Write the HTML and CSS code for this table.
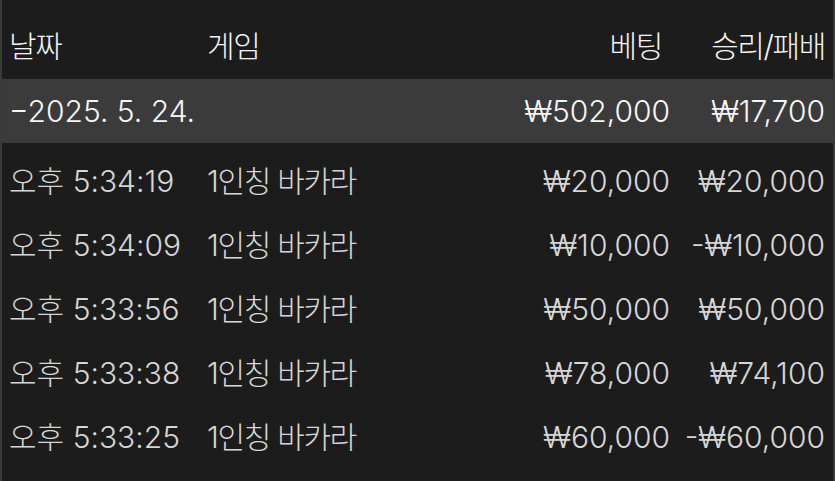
FILE: index.html
```html
<!DOCTYPE html>
<html lang="ko">
<head>
    <meta charset="UTF-8">
    <meta name="viewport" content="width=device-width, initial-scale=1.0">
    <title>베팅 기록</title>
    <link rel="stylesheet" href="styles.css">
</head>
<body>
    <div class="history">
        <div class="row head-row">
            <div class="cell">날짜</div>
            <div class="cell">게임</div>
            <div class="cell num bet-head">베팅</div>
            <div class="cell num">승리/패배</div>
        </div>

        <!-- 날짜별 합계 -->
        <div class="row day-row">
            <div class="cell day">−2025. 5. 24.</div>
            <div class="cell"></div>
            <div class="cell num">₩502,000</div>
            <div class="cell num">₩17,700</div>
        </div>

        <div class="row">
            <div class="cell">오후 5:34:19</div>
            <div class="cell game">1인칭 바카라</div>
            <div class="cell num">₩20,000</div>
            <div class="cell num">₩20,000</div>
        </div>
        <div class="row">
            <div class="cell">오후 5:34:09</div>
            <div class="cell game">1인칭 바카라</div>
            <div class="cell num">₩10,000</div>
            <div class="cell num">-₩10,000</div>
        </div>
        <div class="row">
            <div class="cell">오후 5:33:56</div>
            <div class="cell game">1인칭 바카라</div>
            <div class="cell num">₩50,000</div>
            <div class="cell num">₩50,000</div>
        </div>
        <div class="row">
            <div class="cell">오후 5:33:38</div>
            <div class="cell game">1인칭 바카라</div>
            <div class="cell num">₩78,000</div>
            <div class="cell num">₩74,100</div>
        </div>
        <div class="row">
            <div class="cell">오후 5:33:25</div>
            <div class="cell game">1인칭 바카라</div>
            <div class="cell num">₩60,000</div>
            <div class="cell num">-₩60,000</div>
        </div>
    </div>
</body>
</html>
```

FILE: styles.css
```css
* {
    margin: 0;
    padding: 0;
    box-sizing: border-box;
}

body {
    width: 835px;
    height: 481px;
    background: #1c1c1c;
    font-family: 'Inter', 'Noto Sans CJK KR', sans-serif;
    overflow: hidden;
}

.history {
    height: 481px;
    border-left: 2px solid #3a3a3a;
    border-right: 2px solid #3a3a3a;
    padding-top: 14px;
}

.row {
    display: grid;
    grid-template-columns: 198px 1fr 200px 155px;
    align-items: center;
    height: 64px;
    padding: 0 8px 0 7px;
    color: #d6d6d6;
    font-size: 30px;
    font-weight: 300;
    line-height: 1;
}

/* 한글 글자폭 보정 */
.head-row {
    color: #f4f4f4;
    letter-spacing: -1.4px;
}

.bet-head {
    padding-right: 8px;
}

.game {
    letter-spacing: -1.3px;
}

.day-row {
    background: #3b3b3b;
    color: #f6f6f6;
    margin-top: 1px;
    margin-bottom: 6px;
}

.cell {
    white-space: nowrap;
}

.num {
    text-align: right;
}
```
